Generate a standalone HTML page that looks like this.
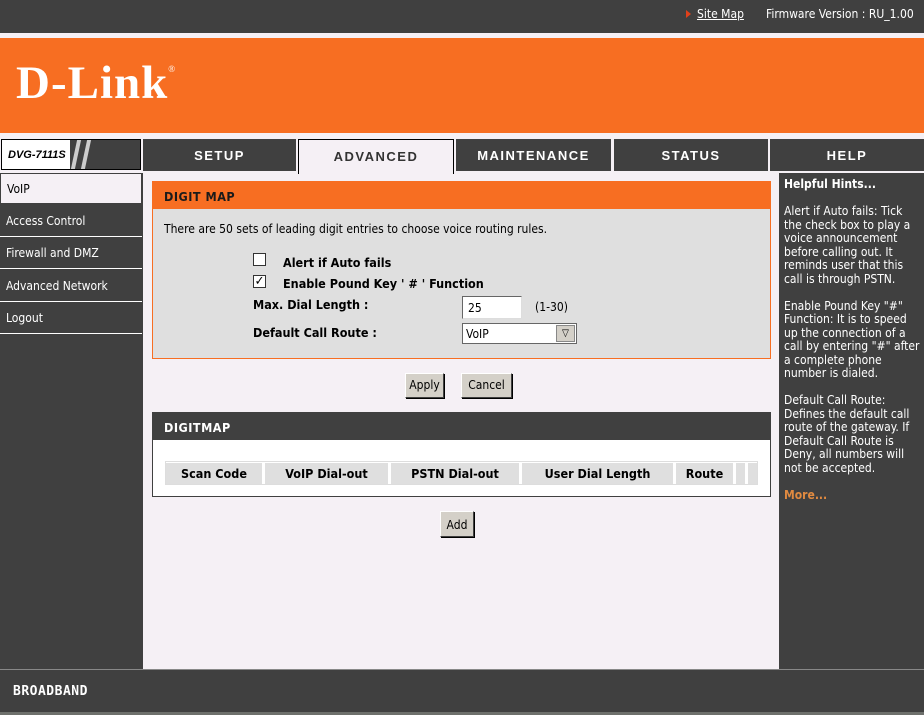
<!DOCTYPE html>
<html><head><style>
*{margin:0;padding:0;box-sizing:border-box}
body{width:924px;height:715px;position:relative;background:#f5f0f5;font-family:"DejaVu Sans Condensed","Liberation Sans",sans-serif;font-size:12px;overflow:hidden;color:#000}
.a{position:absolute}
.tab{position:absolute;top:139px;height:32px;background:#404040;color:#fff;font-family:"Liberation Sans",sans-serif;font-weight:bold;font-size:13px;letter-spacing:1.5px;text-align:center;line-height:34px}
.side{position:absolute;left:0;width:142px;height:31px;color:#fff;line-height:31px;padding-left:6px;border-bottom:1px solid #fff;font-size:12px}
.btn{position:absolute;background:#d4d0c8;border:1px solid;border-color:#fff #404040 #404040 #fff;box-shadow:1px 1px 0 #000;text-align:center;line-height:23px;font-size:12px}
.th{position:absolute;top:463px;height:21px;background:#dfdfdf;font-weight:bold;text-align:center;line-height:22px;font-size:12.5px}
</style></head><body>
<div class="a" style="left:0;top:0;width:924px;height:33px;background:#404040"></div>
<div class="a" style="left:686px;top:10px;width:0;height:0;border-left:5px solid #e0401a;border-top:4px solid transparent;border-bottom:4px solid transparent"></div>
<div class="a" style="left:697px;top:7px;color:#fff;text-decoration:underline">Site Map</div>
<div class="a" style="left:766px;top:7px;color:#fff">Firmware Version : RU_1.00</div>
<div class="a" style="left:0;top:38px;width:924px;height:95px;background:#f76e22"></div>
<div class="a" style="left:16px;top:56px;color:#fff;font-family:'Liberation Serif',serif;font-weight:bold;font-size:47px;letter-spacing:1px">D-Link<sup style="font-size:9px;vertical-align:top;position:relative;top:8px;font-weight:normal">®</sup></div>
<div class="a" style="left:1px;top:139px;width:140px;height:31px;background:#404040;border:1px solid #000"></div>
<div class="a" style="left:2px;top:140px;width:68px;height:29px;background:#fff;font-family:'Liberation Sans',sans-serif;font-style:italic;font-weight:bold;font-size:11px;line-height:30px;padding-left:6px">DVG-7111S</div>
<div class="a" style="left:74px;top:140px;width:4px;height:29px;background:#ccc;transform:skewX(-12deg)"></div>
<div class="a" style="left:84px;top:140px;width:4px;height:29px;background:#ccc;transform:skewX(-12deg)"></div>
<div class="tab" style="left:143px;width:153px">SETUP</div>
<div class="tab" style="left:298px;width:156px;height:35px;background:#f5f0f5;color:#333;border:1px solid #000;border-bottom:none">ADVANCED</div>
<div class="tab" style="left:456px;width:155px">MAINTENANCE</div>
<div class="tab" style="left:614px;width:154px">STATUS</div>
<div class="tab" style="left:770px;width:154px">HELP</div>
<div class="a" style="left:0;top:173px;width:143px;height:496px;background:#404040"></div>
<div class="side" style="top:173px;background:#f5f0f5;color:#000;border:1px solid #404040">VoIP</div>
<div class="side" style="top:206px">Access Control</div>
<div class="side" style="top:238px">Firewall and DMZ</div>
<div class="side" style="top:271px">Advanced Network</div>
<div class="side" style="top:303px">Logout</div>
<div class="a" style="left:779px;top:173px;width:145px;height:496px;background:#404040;color:#fff;padding:5px 0 5px 5px;line-height:13.5px;white-space:nowrap;overflow:hidden">
<b>Helpful Hints...</b><br><br>Alert if Auto fails: Tick<br>the check box to play a<br>voice announcement<br>before calling out. It<br>reminds user that this<br>call is through PSTN.<br><br>Enable Pound Key "#"<br>Function: It is to speed<br>up the connection of a<br>call by entering "#" after<br>a complete phone<br>number is dialed.<br><br>Default Call Route:<br>Defines the default call<br>route of the gateway. If<br>Default Call Route is<br>Deny, all numbers will<br>not be accepted.<br><br><b style="color:#e08a40">More...</b></div>
<div class="a" style="left:152px;top:181px;width:619px;height:178px;background:#dfdfdf;border:1px solid #f76e22"></div>
<div class="a" style="left:152px;top:181px;width:619px;height:28px;background:#f76e22;font-weight:bold;font-size:12.5px;padding:8px 12px;letter-spacing:0.5px;color:#1a1a1a">DIGIT MAP</div>
<div class="a" style="left:164px;top:222px">There are 50 sets of leading digit entries to choose voice routing rules.</div>
<div class="a" style="left:253px;top:253px;width:13px;height:13px;border:1px solid #333;background:#fff"></div>
<div class="a" style="left:283px;top:255px;font-weight:bold;font-size:12.5px">Alert if Auto fails</div>
<div class="a" style="left:253px;top:275px;width:13px;height:13px;border:1px solid #333;background:#fff;font-size:13px;line-height:11px;font-weight:bold;text-align:center">✓</div>
<div class="a" style="left:283px;top:276px;font-weight:bold;font-size:12.5px">Enable Pound Key ' # ' Function</div>
<div class="a" style="left:253px;top:297px;font-weight:bold;font-size:12.5px">Max. Dial Length :</div>
<div class="a" style="left:462px;top:296px;width:60px;height:23px;background:#fff;border:1px solid #888;border-color:#666 #ddd #ddd #666;padding:4px 5px">25</div>
<div class="a" style="left:535px;top:300px">(1-30)</div>
<div class="a" style="left:253px;top:325px;font-weight:bold;font-size:12.5px">Default Call Route :</div>
<div class="a" style="left:462px;top:323px;width:115px;height:21px;background:#fff;border:1px solid #666;padding:3px 3px">VoIP</div>
<div class="a" style="left:556px;top:325px;width:19px;height:17px;background:#d4d0c8;border:1px solid #888;text-align:center;font-size:10px;line-height:16px">▽</div>
<div class="btn" style="left:405px;top:373px;width:39px;height:25px">Apply</div>
<div class="btn" style="left:461px;top:373px;width:51px;height:25px">Cancel</div>
<div class="a" style="left:152px;top:412px;width:619px;height:85px;background:#fff;border:1px solid #404040"></div>
<div class="a" style="left:152px;top:412px;width:619px;height:28px;background:#404040;color:#fff;font-weight:bold;font-size:12.5px;padding:8px 12px;letter-spacing:0.5px">DIGITMAP</div>
<div class="a" style="left:165px;top:461px;width:593px;height:24px;border:1px solid #ddd"></div>
<div class="th" style="left:166px;width:96px">Scan Code</div>
<div class="th" style="left:265px;width:123px">VoIP Dial-out</div>
<div class="th" style="left:391px;width:128px">PSTN Dial-out</div>
<div class="th" style="left:522px;width:151px">User Dial Length</div>
<div class="th" style="left:676px;width:57px">Route</div>
<div class="th" style="left:736px;width:9px"></div>
<div class="th" style="left:748px;width:9px"></div>
<div class="btn" style="left:440px;top:511px;width:34px;height:26px;line-height:26px">Add</div>
<div class="a" style="left:0;top:669px;width:924px;height:43px;background:#404040;border-top:1px solid #888"></div>
<div class="a" style="left:13px;top:684px;color:#fff;font-family:'DejaVu Sans Mono',monospace;font-weight:bold;font-size:13px;letter-spacing:0.5px">BROADBAND</div>
<div class="a" style="left:0;top:712px;width:924px;height:3px;background:#6e706c"></div>
</body></html>
